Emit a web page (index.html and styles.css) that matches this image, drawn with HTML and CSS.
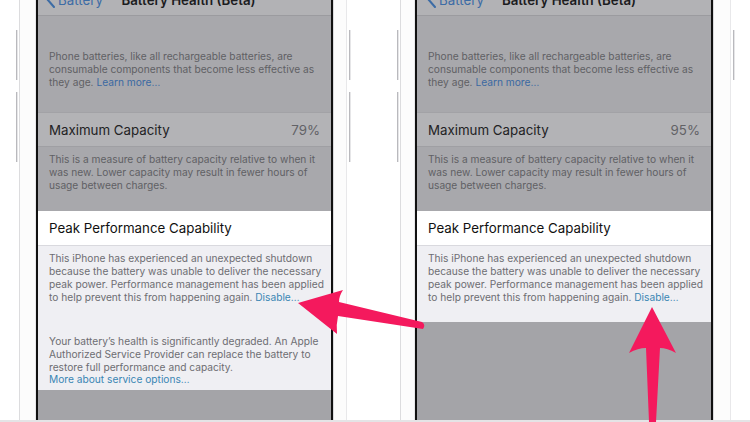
FILE: index.html
```html
<!DOCTYPE html>
<html>
<head>
<meta charset="utf-8">
<link rel="stylesheet" href="styles.css">
</head>
<body>
<div class="stage">
  <div class="phone phone-a">
    <div class="side side-out"><span class="btn b1"></span><span class="btn b2"></span></div>
    <div class="bezel bezel-l"></div>
    <div class="screen">
      <div class="nav">
        <div class="back"><svg class="chev" width="9" height="17" viewBox="0 0 9 17"><path d="M8 1 L1.5 8.5 L8 16" fill="none" stroke="#3d6ca5" stroke-width="2" stroke-linecap="round" stroke-linejoin="round"/></svg><span>Battery</span></div>
        <div class="title">Battery Health (Beta)</div>
        <div></div>
      </div>
      <div class="dim-head">
        <p class="foot dimtext">Phone batteries, like all rechargeable batteries, are<br>consumable components that become less effective as<br>they age. <span class="dimlink">Learn more…</span></p>
      </div>
      <div class="row row-dim"><span class="label">Maximum Capacity</span><span class="val">79%</span></div>
      <div class="dim-foot">
        <p class="foot dimtext">This is a measure of battery capacity relative to when it<br>was new. Lower capacity may result in fewer hours of<br>usage between charges.</p>
      </div>
      <div class="row row-lit"><span class="label">Peak Performance Capability</span></div>
      <div class="lit-foot lit-foot-a">
        <p class="foot">This iPhone has experienced an unexpected shutdown<br>because the battery was unable to deliver the necessary<br>peak power. Performance management has been applied<br>to help prevent this from happening again. <span class="link">Disable…</span></p>
        <p class="foot para2">Your battery’s health is significantly degraded. An Apple<br>Authorized Service Provider can replace the battery to<br>restore full performance and capacity.<br><span class="link">More about service options…</span></p>
      </div>
      <div class="dim-rest"></div>
    </div>
    <div class="bezel bezel-r"></div>
    <div class="side side-in"><span class="btn b1"></span><span class="btn b2"></span></div>
  </div>

  <div class="phone phone-b">
    <div class="side side-in"><span class="btn b1"></span><span class="btn b2"></span></div>
    <div class="bezel bezel-l2"></div>
    <div class="screen screen-b">
      <div class="nav nav-b">
        <div class="back"><svg class="chev" width="9" height="17" viewBox="0 0 9 17"><path d="M8 1 L1.5 8.5 L8 16" fill="none" stroke="#3d6ca5" stroke-width="2" stroke-linecap="round" stroke-linejoin="round"/></svg><span>Battery</span></div>
        <div class="title">Battery Health (Beta)</div>
        <div></div>
      </div>
      <div class="dim-head">
        <p class="foot dimtext">Phone batteries, like all rechargeable batteries, are<br>consumable components that become less effective as<br>they age. <span class="dimlink">Learn more…</span></p>
      </div>
      <div class="row row-dim"><span class="label">Maximum Capacity</span><span class="val">95%</span></div>
      <div class="dim-foot">
        <p class="foot dimtext">This is a measure of battery capacity relative to when it<br>was new. Lower capacity may result in fewer hours of<br>usage between charges.</p>
      </div>
      <div class="row row-lit"><span class="label">Peak Performance Capability</span></div>
      <div class="lit-foot lit-foot-b">
        <p class="foot">This iPhone has experienced an unexpected shutdown<br>because the battery was unable to deliver the necessary<br>peak power. Performance management has been applied<br>to help prevent this from happening again. <span class="link">Disable…</span></p>
      </div>
      <div class="dim-rest"></div>
    </div>
    <div class="bezel bezel-r2"></div>
    <div class="side side-out2"><span class="btn b1"></span></div>
  </div>
</div>
<div class="floor"></div>

<svg class="arrows" width="750" height="422" viewBox="0 0 750 422">
  <path d="M298 303 L343 290 Q339 296 339 302 L422 322 Q426 325 423 329 L338 316 Q336 325 337 334 Z" fill="#f4195d"/>
  <path d="M652 307 L676 353 Q667 348 660 348 L656 422 L649 422 L646 348 Q638 348 629 353 Z" fill="#f4195d"/>
</svg>
</body>
</html>
```

FILE: styles.css
```css
* { box-sizing: border-box; }
html, body { margin: 0; padding: 0; }
body {
  width: 750px;
  height: 422px;
  overflow: hidden;
  background: #ffffff;
  font-family: "Inter", "Roboto", "Liberation Sans", sans-serif;
  position: relative;
}
p { margin: 0; }

.stage {
  display: flex;
  height: 420px;
  padding-left: 15px;
  gap: 43px;
}
.floor { height: 2px; background: #e4e4e6; }

.phone { display: flex; height: 420px; }

.side { display: flex; flex-direction: column; padding-top: 30px; gap: 12px; }
.side-out { width: 4px; align-items: flex-start; padding-left: 1px; }
.side-in { width: 5px; align-items: center; }
.side-out2 { width: 5px; align-items: center; }
.btn { display: block; width: 2px; background: #e6e6e8; border-left: 1px solid #b9b9bd; }
.b1 { height: 50px; }
.b2 { height: 70px; }

.bezel { background: #fcfcfc; border-left: 1px solid #dcdcde; border-right: 1px solid #e8e8ea; }
.bezel-l { width: 17px; }
.bezel-r { width: 14px; }
.bezel-l2 { width: 15px; }
.bezel-r2 { width: 18px; }

.screen {
  width: 297px;
  border-left: 2px solid #111;
  border-right: 2px solid #111;
  display: flex;
  flex-direction: column;
  background: #a8a8ac;
}
.screen-b { width: 298px; }

.nav {
  height: 16px;
  flex: none;
  overflow: hidden;
  background: #b2b2b5;
  border-bottom: 1px solid #9b9b9f;
  display: grid;
  grid-template-columns: 1fr auto 1fr;
  align-items: start;
  padding-left: 8px;
  font-size: 13.3px;
  line-height: 18px;
}
.nav > * { margin-top: -9px; }
.nav-b { padding-left: 10px; }
.back { display: flex; align-items: flex-end; gap: 3px; color: #3d6ca5; }
.chev { flex: none; margin-bottom: 1px; }
.title { font-weight: 600; color: #1c1c1e; }

.foot {
  font-size: 10.2px;
  line-height: 12.8px;
  color: #6d6d72;
  white-space: nowrap;
}
.dimtext { color: #606064; }
.dimlink { color: #3b69a2; }
.link { color: #3a86b4; }

.dim-head { padding: 34px 11px 24px; }
.row {
  height: 35px;
  flex: none;
  display: flex;
  align-items: center;
  justify-content: space-between;
  padding: 0 11px;
  font-size: 13.3px;
}
.row-dim { background: #b3b3b6; border-top: 1px solid #a2a2a6; border-bottom: 1px solid #9f9fa3; color: #222224; }
.row-dim .val { color: #626266; }
.dim-foot { padding: 6px 11px 19px; }
.row-lit { background: #ffffff; border-bottom: 1px solid #d9d9de; color: #111; }
.lit-foot { background: #efeff3; padding: 6.5px 11px 4px; }
.lit-foot-b { padding-bottom: 19px; }
.para2 { margin-top: 31.5px; }
.dim-rest { flex: 1; background: #a4a4a8; }

.arrows { position: absolute; left: 0; top: 0; }
```
